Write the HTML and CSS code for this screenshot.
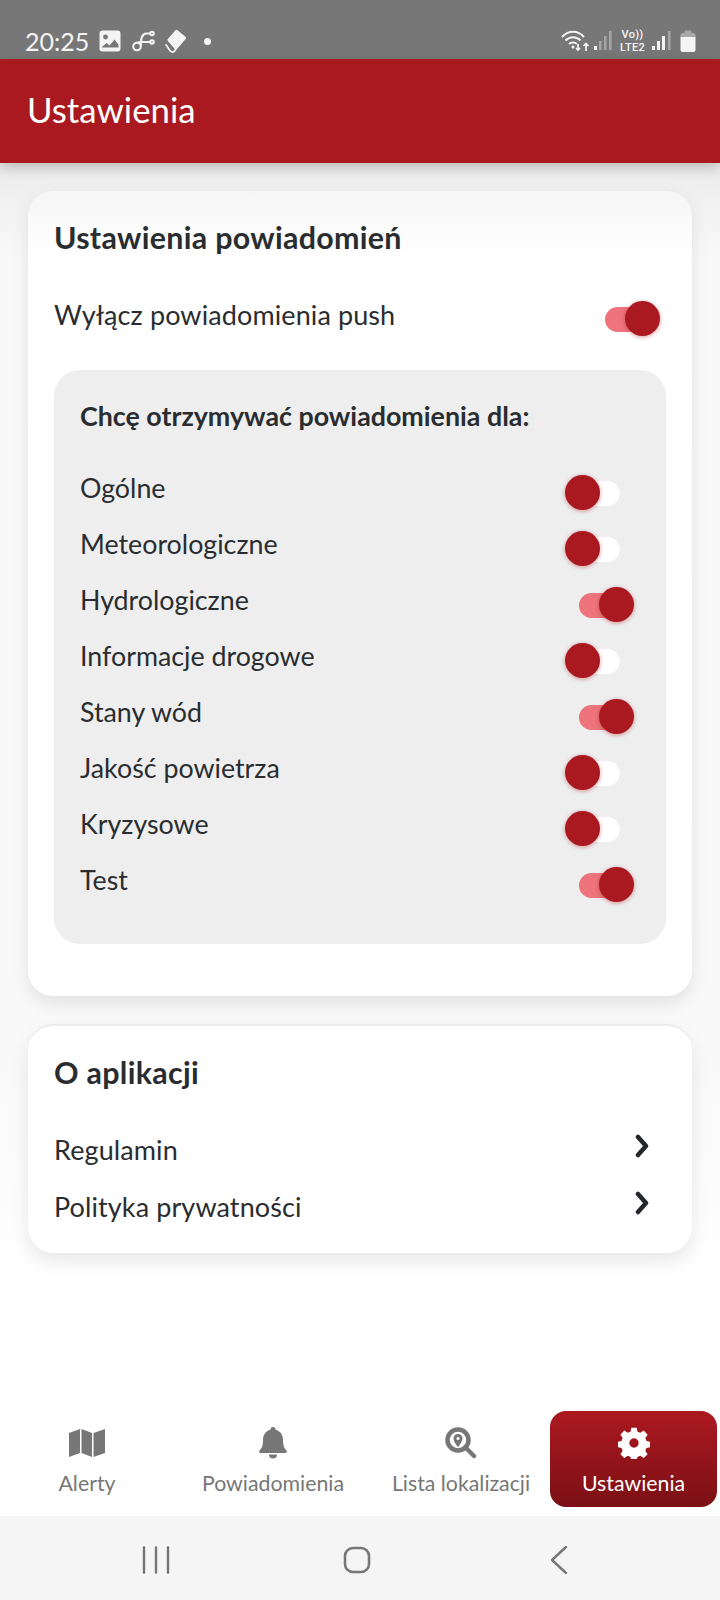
FILE: index.html
```html
<!DOCTYPE html>
<html lang="pl">
<head>
<meta charset="utf-8">
<title>Ustawienia</title>
<link rel="stylesheet" href="styles.css">
</head>
<body>
<div class="screen">
  <div class="status">
    <div class="status-left">
      <span class="clock">20:25</span>
      <svg width="22" height="22" viewBox="0 0 22 22"><rect x="0.500" y="0.500" width="21" height="21" rx="3" fill="#f4f4f4"/><circle cx="6.500" cy="7" r="2.400" fill="#777"/><path d="M2.500 17.500l5-4.500 3 2.500 5-6 4 5v3H2.500z" fill="#777"/></svg>
      <svg class="si-link" width="23" height="22" viewBox="0 0 23 22" fill="none" stroke="#f4f4f4" stroke-width="2"><circle cx="5" cy="16.500" r="3.800"/><circle cx="20" cy="3.500" r="1.800"/><circle cx="20" cy="12" r="1.800"/><path d="M8.800 16.500c0-6 .2-13 5.700-13h3.500M5 12.700c1.500-.7 3-.7 5-.7h8"/></svg>
      <svg width="22" height="25" viewBox="0 0 22 25"><path d="M10.500 1.300a1.500 1.500 0 0 1 2 0l8 6.500a1.500 1.500 0 0 1 .2 2.100L12 20a1.500 1.500 0 0 1-2.200.1L2.800 12a1.500 1.500 0 0 1 .2-2.200z" fill="#f4f4f4"/><path d="M1 16c2 1 3 7 6.500 7 1.800 0 2.500-1 3-2.500" fill="none" stroke="#f4f4f4" stroke-width="1.800" stroke-linecap="round"/></svg>
      <span class="dot"></span>
    </div>
    <div class="status-right">
      <svg class="wifi" width="28" height="22" viewBox="0 0 28 22" fill="none" stroke="#f4f4f4" stroke-width="2"><path d="M1 7c6-7 16-7 22 0M4.500 10.500c4-4.500 11-4.500 15 0M8 14c2-2 6-2 8 0"/><circle cx="12" cy="17" r="1.500" fill="#f4f4f4" stroke="none"/><path d="M17 14v6M15 18l2 2 2-2M25 21v-7M22.500 16l2.500-2.500 2.500 2.500" stroke-width="1.700"/></svg>
      <svg width="20" height="20" viewBox="0 0 20 20"><rect x="1" y="15" width="3" height="4" fill="#f4f4f4"/><rect x="6" y="10" width="2.500" height="9" fill="#a5a5a5"/><rect x="11" y="5" width="2.500" height="14" fill="#a5a5a5"/><rect x="16" y="0" width="2.500" height="19" fill="#a5a5a5"/></svg>
      <span class="volte"><span>Vo))</span><span>LTE2</span></span>
      <svg width="20" height="20" viewBox="0 0 20 20"><rect x="1" y="15" width="3" height="4" fill="#f4f4f4"/><rect x="6" y="10" width="3" height="9" fill="#f4f4f4"/><rect x="11" y="5" width="3" height="14" fill="#f4f4f4"/><rect x="17" y="0" width="2.500" height="19" fill="#a5a5a5"/></svg>
      <svg class="batt" width="16" height="22" viewBox="0 0 15 22"><path d="M4 1.500a1 1 0 0 1 1-1h5a1 1 0 0 1 1 1V3h2a2 2 0 0 1 2 2v2H0V5a2 2 0 0 1 2-2h2z" fill="#a8a8a8"/><path d="M0 7h15v13a2 2 0 0 1-2 2H2a2 2 0 0 1-2-2z" fill="#f4f4f4"/></svg>
    </div>
  </div>

  <header class="appbar">Ustawienia</header>

  <main class="content">
    <section class="card card-main">
      <h2 class="card-title">Ustawienia powiadomień</h2>
      <div class="row row-push">
        <span>Wyłącz powiadomienia push</span>
        <span class="toggle on"><span class="track"></span><span class="thumb"></span></span>
      </div>
      <div class="panel">
        <h3 class="panel-title">Chcę otrzymywać powiadomienia dla:</h3>
        <div class="row"><span>Ogólne</span><span class="toggle"><span class="track"></span><span class="thumb"></span></span></div>
        <div class="row"><span>Meteorologiczne</span><span class="toggle"><span class="track"></span><span class="thumb"></span></span></div>
        <div class="row"><span>Hydrologiczne</span><span class="toggle on"><span class="track"></span><span class="thumb"></span></span></div>
        <div class="row"><span>Informacje drogowe</span><span class="toggle"><span class="track"></span><span class="thumb"></span></span></div>
        <div class="row"><span>Stany wód</span><span class="toggle on"><span class="track"></span><span class="thumb"></span></span></div>
        <div class="row"><span>Jakość powietrza</span><span class="toggle"><span class="track"></span><span class="thumb"></span></span></div>
        <div class="row"><span>Kryzysowe</span><span class="toggle"><span class="track"></span><span class="thumb"></span></span></div>
        <div class="row"><span>Test</span><span class="toggle on"><span class="track"></span><span class="thumb"></span></span></div>
      </div>
    </section>

    <section class="card card-about">
      <h2 class="card-title">O aplikacji</h2>
      <div class="link-row"><span>Regulamin</span><svg class="chev" width="16" height="24" viewBox="0 0 16 24" fill="none" stroke="#23272b" stroke-width="4.500" stroke-linecap="round" stroke-linejoin="round"><path d="M4 3l8 9-8 9"/></svg></div>
      <div class="link-row"><span>Polityka prywatności</span><svg class="chev" width="16" height="24" viewBox="0 0 16 24" fill="none" stroke="#23272b" stroke-width="4.500" stroke-linecap="round" stroke-linejoin="round"><path d="M4 3l8 9-8 9"/></svg></div>
    </section>
  </main>

  <nav class="tabs">
    <div class="tab">
      <svg width="36" height="30" viewBox="0 0 36 30" fill="#777"><path d="M0 5l11-4v24L0 29zM12.500 1l10.500 4v24l-10.500-4zM24.500 5L36 1v24l-11.500 4z"/></svg>
      <span>Alerty</span>
    </div>
    <div class="tab">
      <svg width="28" height="32" viewBox="0 0 28 32" fill="#777"><path d="M14 0a2.500 2.500 0 0 1 2.500 2.700C21.500 4 24 8 24 13c0 6 1.500 8.500 3.500 10.500.8 1 .3 2.500-1 2.500H1.500c-1.300 0-1.800-1.500-1-2.500C2.500 21.500 4 19 4 13c0-5 2.500-9 7.500-10.300A2.500 2.500 0 0 1 14 0z"/><path d="M10 27.500h8a4 4 0 0 1-8 0z"/></svg>
      <span>Powiadomienia</span>
    </div>
    <div class="tab">
      <svg width="32" height="32" viewBox="0 0 32 32"><circle cx="13" cy="13" r="10.500" fill="none" stroke="#777" stroke-width="4.500"/><path d="M21 21l8 8" stroke="#777" stroke-width="4.500" stroke-linecap="round"/><path d="M13 7a4.500 4.500 0 0 0-4.500 4.500C8.500 15 13 20 13 20s4.500-5 4.500-8.500A4.500 4.500 0 0 0 13 7z" fill="#777"/><circle cx="13" cy="11.500" r="1.500" fill="#fff"/></svg>
      <span>Lista lokalizacji</span>
    </div>
    <div class="tab active">
      <svg width="32" height="32" viewBox="0 0 24 24" fill="#fff"><path fill-rule="evenodd" d="M10 0.500h4l.6 3 2.100.9 2.600-1.700 2.900 3.100-1.700 2.500.9 2.200 3 .6v4l-3 .6-.9 2.100 1.700 2.600-2.900 2.900-2.600-1.700-2.100.9-.6 3h-4l-.6-3-2.100-.9-2.600 1.700-2.900-2.900 1.700-2.600-.9-2.100-3-.6v-4l3-.6.9-2.200L1.800 5.800l2.900-3.100 2.600 1.700 2.100-.9zM12 8.500a3.500 3.500 0 1 0 0 7 3.500 3.500 0 0 0 0-7z"/></svg>
      <span>Ustawienia</span>
    </div>
  </nav>

  <div class="sysnav">
    <svg width="28" height="28" viewBox="0 0 28 28" fill="none" stroke="#777" stroke-width="2.400" stroke-linecap="round"><path d="M2 1.500v25M14 1.500v25M26 1.500v25"/></svg>
    <svg width="28" height="28" viewBox="0 0 28 28" fill="none" stroke="#777" stroke-width="2.600"><rect x="2" y="2" width="24" height="24" rx="8"/></svg>
    <svg width="18" height="30" viewBox="0 0 18 30" fill="none" stroke="#777" stroke-width="2.400" stroke-linecap="round" stroke-linejoin="round"><path d="M16 2L2 15l14 13"/></svg>
  </div>
</div>
</body>
</html>
```
FILE: styles.css
```css
* { box-sizing: border-box; }
html, body { margin: 0; padding: 0; }
body { font-family: "Lato", "Noto Sans", sans-serif; color: #2a2d30; background: #fff; }
.screen { width: 720px; height: 1600px; display: flex; flex-direction: column; overflow: hidden; background: #fff; }

.status { height: 59px; flex: none; background: #777; display: flex; justify-content: space-between; align-items: flex-end; padding: 0 24px 6px 25px; color: #f4f4f4; }
.status-left, .status-right { display: flex; align-items: center; height: 24px; }
.status-left { gap: 10px; }
.status-right { gap: 6px; }
.clock { font-size: 25px; line-height: 24px; }
.si-link { margin-left: 1px; }
.dot { width: 7px; height: 7px; border-radius: 50%; background: #f4f4f4; margin-left: 7px; }
.wifi { margin-right: -2px; }
.volte { width: 27px; display: flex; flex-direction: column; align-items: center; font-family: "Roboto", sans-serif; font-weight: 500; font-size: 11px; letter-spacing: .3px; line-height: 13px; margin-right: -1px; white-space: nowrap; }
.batt { margin-left: 3px; }

.appbar { height: 104px; flex: none; background: #a9191f; color: #fff; font-size: 34.8px; line-height: 102px; padding-left: 27px; box-shadow: 0 5px 12px rgba(0,0,0,.2); position: relative; z-index: 2; }

.content { flex: 1; background: linear-gradient(#ececec, #f8f8f8 90px, #f9f9f9 900px, #fff 1130px); padding: 26px 28px 0; display: flex; flex-direction: column; gap: 28px; }
.card { background: #fff; border-radius: 26px; padding: 0 26px; border-top: 2px solid #ececec; box-shadow: 0 8px 18px rgba(0,0,0,.09); }
.card-main { height: 807px; background: linear-gradient(#f6f6f6, #fff 70px); }
.card-about { height: 229px; }
.card-title { margin: 0; font-size: 30.4px; font-weight: 700; letter-spacing: .3px; line-height: 36px; padding-top: 28px; }

.row { display: flex; justify-content: space-between; align-items: center; font-size: 27px; height: 56px; letter-spacing: .1px; }
.row-push { margin-top: 31px; padding-right: 6px; }

.panel { margin-top: 28px; height: 574px; width: 612px; background: #eee; border-radius: 26px; padding: 29px 26px 0; }
.panel-title { margin: 0 0 27px; font-size: 26.8px; font-weight: 700; line-height: 34px; }
.panel .row { padding-right: 6px; font-size: 26.8px; letter-spacing: 0; }

.toggle { position: relative; width: 69px; height: 36px; display: block; flex: none; margin-top: 10px; }
.track { position: absolute; left: 14px; right: 14px; top: 6px; height: 25px; border-radius: 13px; background: #fff; }
.thumb { position: absolute; left: 0; top: 0; width: 35px; height: 35px; border-radius: 50%; background: #a9191f; box-shadow: 0 1px 4px rgba(169,25,31,.45); }
.toggle.on .track { background: #ee737c; }
.toggle.on .thumb { left: 34px; }

.link-row { display: flex; justify-content: space-between; align-items: center; font-size: 27px; letter-spacing: .1px; height: 57px; padding-right: 16px; }
.card-about .link-row:first-of-type { margin-top: 31px; }
.chev { margin-top: -8px; }

.tabs { height: 116px; flex: none; background: #fff; display: grid; grid-template-columns: 174px 198px 178px 167px 3px; padding-top: 11px; margin-top: -116px; position: relative; z-index: 1; }
.tab { height: 96px; display: flex; flex-direction: column; align-items: center; padding-top: 16px; color: #777; font-size: 21.3px; }
.tab svg { height: 32px; flex: none; }
.tab span { margin-top: 11px; line-height: 26px; }
.tab.active { color: #fff; background: linear-gradient(#ab191f, #7b1015); border-radius: 16px; }

.sysnav { height: 84px; flex: none; background: #f5f5f5; display: grid; grid-template-columns: 156px 246px 158px; justify-items: center; align-items: center; padding: 4px 0 0 78px; }
```
